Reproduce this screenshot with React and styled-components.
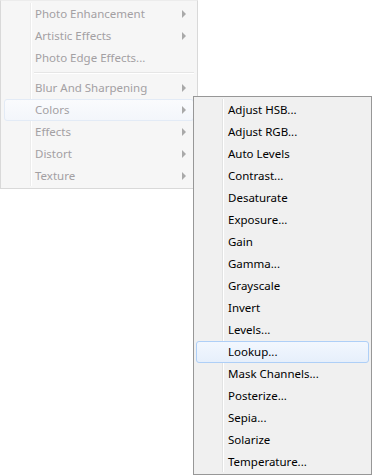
import React from "react";
import styled, { createGlobalStyle } from "styled-components";

const Global = createGlobalStyle`
  html, body {
    margin: 0;
    padding: 0;
    background: #fff;
  }
  body {
    font-family: "Noto Sans", "Open Sans", sans-serif;
    font-size: 11.5px;
  }
`;

const Stage = styled("div")`
  position: relative;
  width: 372px;
  height: 476px;
`;

const Menu = styled("div")`
  position: relative;
  box-sizing: border-box;
  width: ${props => props.width}px;
  padding: ${props => (props.sub ? "2px 2px 1px" : "2px 3px 1px 3px")};
  background: ${props => (props.sub ? "#f0f0f0" : "#f6f6f6")};
  border: 1px solid ${props => (props.sub ? "#979797" : "#d9d9d9")};
  ${props => (props.sub ? "" : "border-top-color: #ececec;")}
  &::before {
    content: "";
    position: absolute;
    top: 2px;
    bottom: 2px;
    left: ${props => props.gutter}px;
    width: 1px;
    background: ${props => (props.sub ? "#e2e3e3" : "#ececec")};
    border-right: 1px solid #fff;
  }
`;

const SubMenu = styled(Menu)`
  position: absolute;
  left: 193px;
  top: 96px;
`;

const Item = styled("div")`
  position: relative;
  display: flex;
  align-items: center;
  height: 22px;
  box-sizing: border-box;
  padding-left: ${props => props.indent}px;
  color: ${props => (props.dim ? "#a3a0a3" : "#000")};
  border: 1px solid transparent;
  border-radius: 3px;
  white-space: nowrap;
  ${props =>
    props.active &&
    `
    border-color: ${props.dim ? "#e3ebf6" : "#aecff7"};
    background: ${
      props.dim
        ? "linear-gradient(#fafbfd, #f3f6fb)"
        : "linear-gradient(#f2f7fe, #e6effb)"
    };
  `}
`;

const Label = styled("span")`
  flex: 1;
  position: relative;
  top: -1px;
`;

const Arrow = styled("span")`
  width: 0;
  height: 0;
  margin-right: 7px;
  border-top: 4px solid transparent;
  border-bottom: 4px solid transparent;
  border-left: 4px solid #a9a9a9;
`;

const Separator = styled("div")`
  margin: 3px 0 3px 30px;
  height: 1px;
  background: #e6e6e6;
  border-bottom: 1px solid #fff;
`;

const mainItems = [
  { label: "Photo Enhancement", arrow: true },
  { label: "Artistic Effects", arrow: true },
  { label: "Photo Edge Effects..." },
  { separator: true },
  { label: "Blur And Sharpening", arrow: true },
  { label: "Colors", arrow: true, active: true },
  { label: "Effects", arrow: true },
  { label: "Distort", arrow: true },
  { label: "Texture", arrow: true }
];

const colorItems = [
  "Adjust HSB...",
  "Adjust RGB...",
  "Auto Levels",
  "Contrast...",
  "Desaturate",
  "Exposure...",
  "Gain",
  "Gamma...",
  "Grayscale",
  "Invert",
  "Levels...",
  "Lookup...",
  "Mask Channels...",
  "Posterize...",
  "Sepia...",
  "Solarize",
  "Temperature..."
];

export default function App() {
  return (
    <Stage>
      <Global />
      <Menu width={198} gutter={29}>
        {mainItems.map((item, i) =>
          item.separator ? (
            <Separator key={i} />
          ) : (
            <Item key={i} dim indent={30} active={item.active}>
              <Label>{item.label}</Label>
              {item.arrow && <Arrow />}
            </Item>
          )
        )}
      </Menu>
      <SubMenu sub width={179} gutter={28}>
        {colorItems.map(label => (
          <Item key={label} indent={31} active={label === "Lookup..."}>
            <Label>{label}</Label>
          </Item>
        ))}
      </SubMenu>
    </Stage>
  );
}
